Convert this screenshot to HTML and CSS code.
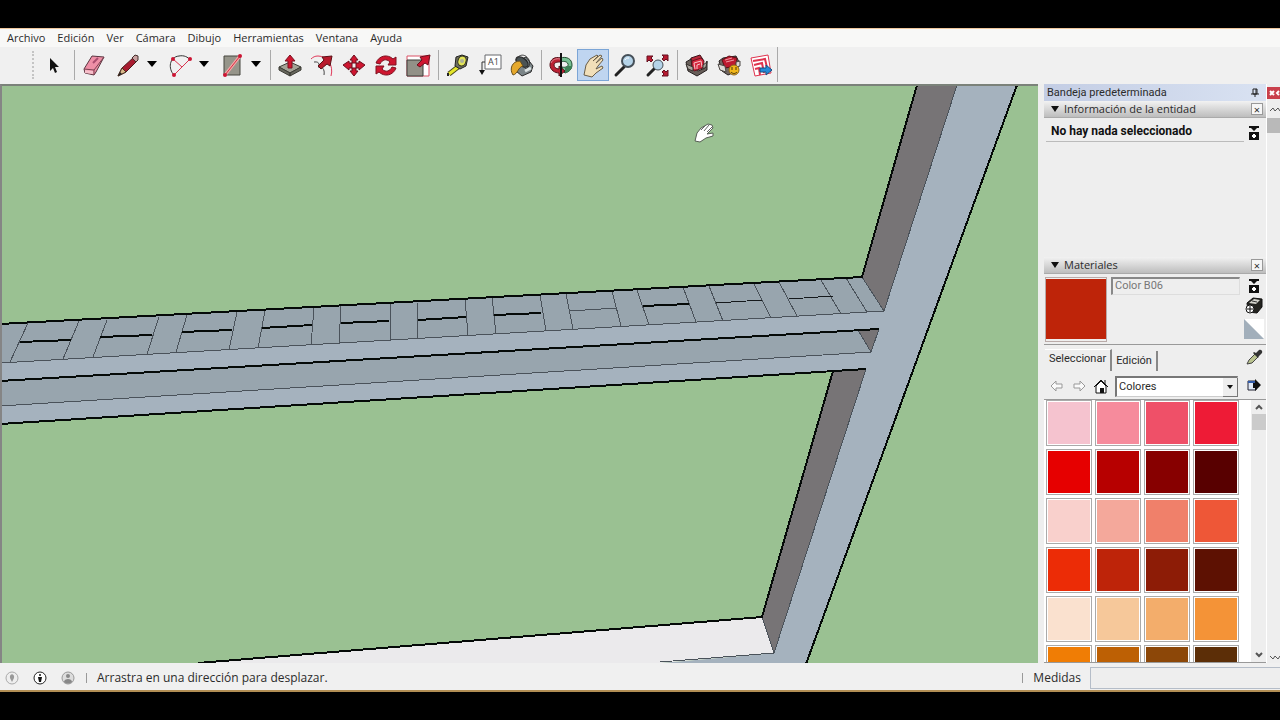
FILE: index.html
```html
<!DOCTYPE html>
<html lang="es">
<head>
<meta charset="utf-8">
<title>Modelador 3D</title>
<link rel="stylesheet" href="styles.css">
</head>
<body>
<div class="app">
  <nav class="menu" aria-label="Menú principal">
    <button>Archivo</button><button>Edición</button><button>Ver</button><button>Cámara</button><button>Dibujo</button><button>Herramientas</button><button>Ventana</button><button>Ayuda</button>
  </nav>

  <div class="toolbar" role="toolbar" aria-label="Herramientas">
    <span class="grip"></span>
    <button class="tool" aria-label="Seleccionar"><svg viewBox="0 0 32 32"><path d="M12 9v13l3-3 2 5 2-1-2-5h4z" fill="#111"/></svg></button>
    <span class="sep"></span>
    <button class="tool" aria-label="Borrador"><svg viewBox="0 0 32 32"><path d="M6 20 14 7l12 1-8 15-2 3-9-2z" fill="#ee8fa6" stroke="#5a3540"/><path d="m6 20 10 1 10-13M16 21v5" fill="none" stroke="#7c4352"/><path d="m7 21 8 1v3l-8-1z" fill="#f7c0cb"/><path d="m15 14 5-5" stroke="#a94d70" stroke-width="2"/></svg></button>
    <span class="split">
      <button class="tool" aria-label="Línea"><svg viewBox="0 0 32 32"><path d="m6 27 4-8L22 8l4 3-12 12z" fill="#a81c30" stroke="#4b1c1c"/><path d="m6 27 4-8 4 4z" fill="#d9b98a" stroke="#4b3020"/><path d="m6 27 2-4 2 2z" fill="#222"/><path d="m20 9 3-3 3 1v4l-2 2z" fill="#c8a0a0" stroke="#44302c"/></svg></button>
      <button class="drop" aria-label="Más líneas"><svg viewBox="0 0 16 16"><path d="M3 4h10l-5 6z"/></svg></button>
    </span>
    <span class="split">
      <button class="tool" aria-label="Arco"><svg viewBox="0 0 32 32"><path d="M10 26C4 20 5 8 15 7c5-1 9 1 11 4" fill="none" stroke="#333"/><path d="m10 26 16-16M9 10l9 8" fill="none" stroke="#d8334e"/><g fill="#cc1533"><circle cx="10" cy="26" r="2"/><circle cx="26" cy="10" r="2"/><circle cx="9" cy="10" r="2"/></g></svg></button>
      <button class="drop" aria-label="Más arcos"><svg viewBox="0 0 16 16"><path d="M3 4h10l-5 6z"/></svg></button>
    </span>
    <span class="split">
      <button class="tool" aria-label="Rectángulo"><svg viewBox="0 0 32 32"><path d="M8 7h16v19H8z" fill="#96958a" stroke="#47473f"/><path d="M9 26 24 7" stroke="#f6a6a6" stroke-width="3"/><path d="M9 26 24 7" stroke="#d33346"/><circle cx="9" cy="26" r="2" fill="#cc1533"/><circle cx="24" cy="7" r="2" fill="#cc1533"/></svg></button>
      <button class="drop" aria-label="Más formas"><svg viewBox="0 0 16 16"><path d="M3 4h10l-5 6z"/></svg></button>
    </span>
    <span class="sep"></span>
    <button class="tool" aria-label="Empujar/tirar"><svg viewBox="0 0 32 32"><path d="m5 18 11-5 11 5-11 6z" fill="#a3a296" stroke="#3c3c36"/><path d="m5 18 11 6v3L5 21zm22 0-11 6v3l11-6z" fill="#66665c" stroke="#3c3c36"/><path d="M14 19v-7h-3l5-6 5 6h-3v7z" fill="#cf1630" stroke="#7a1020"/></svg></button>
    <button class="tool" aria-label="Equidistancia"><svg viewBox="0 0 32 32"><path d="M8 13c7-1 5 5 4 5m0 0c4-1 7 2 6 8" fill="none" stroke="#444"/><path d="M5 10c2-2 4-3 7-3 9 0 16 9 13 20" fill="none" stroke="#e0395a"/><path d="m12 17 6-6-2-3 10-1-2 10-3-2-6 5z" fill="#b81a2c" stroke="#5a1015"/></svg></button>
    <button class="tool" aria-label="Mover"><svg viewBox="0 0 32 32"><g fill="#cf1630" stroke="#6d0f1d"><path d="m16 6 4 5h-2v3h-4v-3h-2z"/><path d="m16 27 4-5h-2v-3h-4v3h-2z"/><path d="m5 16 6-4v2h3v5h-3v2z"/><path d="m27 16-6-4v2h-3v5h3v2z"/></g></svg></button>
    <button class="tool" aria-label="Rotar"><svg viewBox="0 0 32 32"><g fill="#cf1630" stroke="#7d1220"><path d="M6 14C9 6 18 5 23 10l3-2v8h-8l2-3c-4-4-8-2-10 2z"/><path d="M26 19c-3 8-12 9-17 4l-3 2v-8h8l-2 3c4 4 8 2 10-2z"/></g></svg></button>
    <button class="tool" aria-label="Escala"><svg viewBox="0 0 32 32"><path d="M5 7h22v20H5z" fill="#fff" stroke="#db5266"/><path d="M5 11h16v16H5z" fill="#929187" stroke="#3d3d38"/><path d="m15 16 5-5-2-3 10-2-2 10-3-2-5 4z" fill="#cf1630" stroke="#6d0f1d"/></svg></button>
    <span class="sep"></span>
    <button class="tool" aria-label="Medir"><svg viewBox="0 0 32 32"><path d="m7 25 9-7" stroke="#4a4a1c" stroke-width="5"/><path d="m7 25 9-7" stroke="#e5e62b" stroke-width="3"/><path d="M13 17 14 8l6-2 6 2-2 9-6 3z" fill="#6d6e60" stroke="#222"/><ellipse cx="20" cy="12" rx="4" ry="5" fill="#e4e559" stroke="#32321c" transform="rotate(20 20 12)"/><circle cx="20" cy="12" r="2" fill="#aeb29b"/><path d="M6 24v3" stroke="#222" stroke-width="2"/></svg></button>
    <button class="tool" aria-label="Texto"><svg viewBox="0 0 32 32"><path d="M11 6h16v14H11z" fill="#fff" stroke="#66686c"/><text x="14" y="16" class="glyph">A1</text><path d="M11 13H8v9" fill="none" stroke="#333"/><path d="M5 21h6l-3 5z" fill="#111"/></svg></button>
    <button class="tool" aria-label="Pintar"><svg viewBox="0 0 32 32"><path d="m11 12 9-4 7 9-2 6-9 4-6-5z" fill="#7b8588" stroke="#2b2b2b"/><ellipse cx="16" cy="13" rx="7" ry="4" fill="#4a5354" stroke="#222" transform="rotate(35 16 13)"/><path d="M14 12C6 12 3 20 7 26c5-1 5-8 10-9z" fill="#e6a92c" stroke="#69501e"/><path d="M10 12c1-6 9-9 13-1 2 5-1 8-4 9" fill="none" stroke="#333"/><path d="m19 22 6-3" stroke="#dce2e2" stroke-width="3"/></svg></button>
    <span class="sep tight"></span>
    <button class="tool" aria-label="Orbitar"><svg viewBox="0 0 32 32"><path d="M15 9c7-2 12 1 12 7 0 4-3 7-7 8l-3-3v-3c4 1 7-1 6-3-1-3-5-3-8-2z" fill="#77c193" stroke="#234d31"/><path d="M22 17h5c0 4-4 6-7 7v-5z" fill="#3d8356"/><path d="M16 9C9 7 5 11 5 16c0 5 5 8 9 8v3l6-5-6-5v3c-3 0-5-2-5-4 0-3 4-3 7-3z" fill="#bb2134" stroke="#551019"/><path d="M6 14c1-3 5-5 9-4" fill="none" stroke="#df8b94"/><path d="M16 4v24" stroke="#111" stroke-width="2"/></svg></button>
    <button class="tool active" aria-label="Desplazar" aria-pressed="true"><svg viewBox="0 0 32 32"><path d="m7 26 2-10 4-6 7-4 1 1-5 5 7-6 2 1-6 7 6-5 1 2-5 6-2 3 6-3 1 2-7 5-4 4z" fill="#f1dfb9" stroke="#695d48"/></svg></button>
    <button class="tool" aria-label="Zoom"><svg viewBox="0 0 32 32"><path d="m7 26 8-8" stroke="#222" stroke-width="3" stroke-linecap="round"/><circle cx="19" cy="12" r="6" fill="#b5d3e8" stroke="#454f58" stroke-width="2"/><path d="M16 11c1-2 2-2 4-2" stroke="#fff" fill="none"/></svg></button>
    <button class="tool" aria-label="Ver modelo centrado"><svg viewBox="0 0 32 32"><path d="m7 26 7-7" stroke="#222" stroke-width="3" stroke-linecap="round"/><circle cx="17" cy="16" r="5" fill="#b5d3e8" stroke="#454f58"/><g fill="#b71a30" stroke="#641020"><path d="M6 7h6l-2 2 2 2-2 2-2-2-2 2z"/><path d="M27 6v6l-2-2-2 2-2-2 2-2-2-2z"/><path d="M27 27h-6l2-2-2-2 2-2 2 2 2-2z"/></g></svg></button>
    <span class="sep"></span>
    <button class="tool" aria-label="3D Warehouse"><svg viewBox="0 0 32 32"><path d="m10 9 9-3 4 6-5 5-9-1z" fill="#b8273a" stroke="#3c1218"/><path d="m5 13 5-3 1 8 6 4 7-3 2-7v9l-10 6-9-5z" fill="#675e59" stroke="#262020"/><path d="m11 12 9-3 3 3-1 7-9 3-2-3z" fill="#d5273e" stroke="#6c1420"/><path d="m14 20-1-6 7-2 1 6m-5 2v-4l3-1" fill="none" stroke="#f8c3c8"/><path d="m5 15 7 3v4l-5-2zm17 1 4-3-1 5-3 2z" fill="#aba59f" stroke="#37322e"/></svg></button>
    <button class="tool" aria-label="Compartir modelo"><svg viewBox="0 0 32 32"><path d="m6 12 4-3 13-2 3 6-2 9-9 4-6-4z" fill="#716763" stroke="#262020"/><path d="m9 11 7-4 8 2-1 8-11 2z" fill="#bd1a2f" stroke="#5c1018"/><path d="m12 11 7-2m-6 4 8-2" stroke="#f29ca6"/><path d="m5 15 7 2 1 6-6-2zm18-2 4-1v5l-4 1z" fill="#ddd9d5" stroke="#4b4642"/><circle cx="21" cy="21" r="5" fill="#f1b719" stroke="#8d661c"/><path d="M19 18v3m4-3v3m-5 2c2 2 4 2 6 0" fill="none" stroke="#47320f"/></svg></button>
    <button class="tool" aria-label="Enviar a LayOut"><svg viewBox="0 0 32 32"><path d="m6 9 17-3 3 18-16 3z" fill="#fff" stroke="#df334e"/><path d="m8 12 12-2 3 13M9 16l8-2 2 10M10 20l4-1 1 7" fill="none" stroke="#df334e" stroke-width="2"/><path d="M15 19h6v-3l6 5-6 5v-3h-6z" fill="#2589d8" stroke="#164e80"/></svg></button>
    <span class="sep edge"></span>
  </div>

  <div class="main">
    <main class="view">
      <svg class="scene" viewBox="2 86 1036 577" preserveAspectRatio="xMinYMin slice" role="img" aria-label="Modelo 3D">
        <path class="light" d="M0 363 884 311 956 85h61L806 664H650l124-11 92-284L0 424z"/>
        <path class="deck" d="m0 324 862-47 22 34L0 363z"/>
        <path class="deck" d="m0 381 879-52-8 23L0 406z"/>
        <path class="dark" d="M917 85 862 277l22 34 73-226z"/>
        <path class="dark" d="m833 371-71 246 12 36 92-284z"/>
        <path class="dark" d="m858 330 21-1-8 23z"/>
        <path class="pale" d="m186 664 576-47 12 36-124 11z"/>
        <g class="thin">
          <path d="m0 363 884-52 73-226M0 406l871-54 8-23M858 330l13 22M862 277l22 34M866 369l-92 284-12-36M774 653l-114 9"/>
          <path d="M28 323 10 362M79 321 63 359M107 320 93 357M159 317l-12 37M187 315l-11 37M237 312l-8 38M265 311l-7 37M314 308l-3 37M341 306l-2 37M390 303v37M417 302l1 36M465 299l3 36M492 297l4 37M540 295l6 36M566 294l7 35M612 291l9 35M637 290l12 35M683 287l13 35M709 286l14 35M754 284l17 34M779 282l18 34M821 280l20 34M846 278l21 34"/>
          <path d="m569 311 48-3"/>
        </g>
        <path class="mid" d="M716 303l46-3M789 299l44-3"/>
        <g class="thick">
          <path d="m0 324 862-47 55-192M0 381l879-52M0 424l866-55M833 371l-71 246-564 46M1017 85 806 664"/>
          <path d="m20 342 51-2M100 337l52-2M182 332l50-2M262 328l50-3M341 323l48-2M418 320l48-3M494 315l47-2M643 306l46-2"/>
        </g>
        <path d="m695 141 2-8 4-5 7-4 4 1 1 3-6 6 6-1v3l-7 2-6 4z" fill="#fff" stroke="#575f55"/>
        <path d="m701 130 4-4m-1 5 5-6m-2 7 5-5" stroke="#666" fill="none"/>
      </svg>
    </main>

    <aside class="tray">
      <div class="tray-title"><h1>Bandeja predeterminada</h1>
        <button class="pin" aria-label="Fijar"><svg viewBox="0 0 10 10"><path d="M3 1h4v5H3zM1 6h8M5 6v3" fill="none" stroke="#222"/><path d="M6 1v5" stroke="#222"/></svg></button>
      </div>

      <section class="entity">
        <div class="head"><button class="fold"><span class="tri"></span>Información de la entidad</button><button class="close" aria-label="Cerrar información">×</button></div>
        <div class="entity-row">
          <p>No hay nada seleccionado</p>
          <button class="mini" aria-label="Mostrar detalles"><svg viewBox="0 0 12 14"><path d="M1 0h10v2H1zM3 2h6L6 5zM1 6h10v8H1z" fill="#111"/><path d="M6 8v4M4 10h4" stroke="#fff" stroke-width="2"/></svg></button>
        </div>
      </section>

      <section class="materials">
        <div class="head"><button class="fold"><span class="tri"></span>Materiales</button><button class="close" aria-label="Cerrar materiales">×</button></div>
        <div class="current">
          <div class="preview"></div>
          <input type="text" value="Color B06" aria-label="Nombre del material" disabled>
          <div class="side">
            <button class="mini" aria-label="Panel secundario"><svg viewBox="0 0 12 14"><path d="M1 0h10v2H1zM3 2h6L6 5zM1 6h10v8H1z" fill="#111"/><path d="M6 8v4M4 10h4" stroke="#fff" stroke-width="2"/></svg></button>
            <button class="create" aria-label="Crear material"><svg viewBox="0 0 20 20"><path d="m3 7 6-5 9 1v8l-5 6-9-1z" fill="#242420" stroke="#111"/><path d="m5 7 5-4 6 1-4 4z" fill="#d4d4cd"/><path d="m8 5 5 1" stroke="#333"/><circle cx="6" cy="13" r="4" fill="#fff" stroke="#111"/><path d="M6 10v6M3 13h6" stroke="#111"/></svg></button>
            <button class="create" aria-label="Material predeterminado"><svg viewBox="0 0 20 20"><path d="M0 0h20v20z" fill="#fff"/><path d="m0 0 20 20H0z" fill="#a2afbb"/></svg></button>
          </div>
        </div>
        <div class="tabs" role="tablist">
          <button role="tab" class="tab on" aria-selected="true">Seleccionar</button><button role="tab" class="tab" aria-selected="false">Edición</button>
          <button class="dropper" aria-label="Muestra de pintura"><svg viewBox="0 0 18 18"><path d="m2 16 2-4 6-6 3 3-6 6z" fill="#bac38f" stroke="#444"/><path d="m8 5 5 5 1-2 3-3c1-2-1-4-3-3l-3 3-2-1z" fill="#333"/></svg></button>
        </div>
        <div class="nav">
          <button aria-label="Atrás"><svg viewBox="0 0 16 16"><path d="m2 7 5-5v3h6v4H7v3z" fill="#fafafa" stroke="#999"/></svg></button>
          <button aria-label="Adelante"><svg viewBox="0 0 16 16"><path d="M14 7 9 2v3H3v4h6v3z" fill="#fafafa" stroke="#999"/></svg></button>
          <button aria-label="En el modelo"><svg viewBox="0 0 16 16"><path d="M3 7v7h10V7L8 2z" fill="#fff" stroke="#111"/><path d="m1 8 7-7 7 7M12 1v4" fill="none" stroke="#111"/><path d="M7 9h4v5H7z" fill="#111"/></svg></button>
          <span class="picker"><select aria-label="Biblioteca"><option>Colores</option></select><span class="picker-btn"></span></span>
          <button class="detail" aria-label="Detalles"><svg viewBox="0 0 16 16"><path d="M2 2h8v9H2z" fill="#dfe8f6" stroke="#223"/><path d="M2 2h8v2H2z" fill="#335caa"/><path d="m9 0 6 6-6 6V9H7V4h2z" fill="#111"/></svg></button>
        </div>
        <div class="library">
          <div class="swatches">
            <button class="a1" aria-label="Color A01"></button><button class="a2" aria-label="Color A02"></button><button class="a3" aria-label="Color A03"></button><button class="a4" aria-label="Color A04"></button>
            <button class="a5" aria-label="Color A05"></button><button class="a6" aria-label="Color A06"></button><button class="a7" aria-label="Color A07"></button><button class="a8" aria-label="Color A08"></button>
            <button class="b1" aria-label="Color B01"></button><button class="b2" aria-label="Color B02"></button><button class="b3" aria-label="Color B03"></button><button class="b4" aria-label="Color B04"></button>
            <button class="b5" aria-label="Color B05"></button><button class="b6" aria-label="Color B06"></button><button class="b7" aria-label="Color B07"></button><button class="b8" aria-label="Color B08"></button>
            <button class="c1" aria-label="Color C01"></button><button class="c2" aria-label="Color C02"></button><button class="c3" aria-label="Color C03"></button><button class="c4" aria-label="Color C04"></button>
            <button class="c5" aria-label="Color C05"></button><button class="c6" aria-label="Color C06"></button><button class="c7" aria-label="Color C07"></button><button class="c8" aria-label="Color C08"></button>
          </div>
          <div class="scroll">
            <button aria-label="Subir"><svg viewBox="0 0 14 14"><path d="m4 9 3-3 3 3" fill="none" stroke="#555" stroke-width="2"/></svg></button>
            <span class="thumb"></span>
            <button aria-label="Bajar"><svg viewBox="0 0 14 14"><path d="m4 5 3 3 3-3" fill="none" stroke="#555" stroke-width="2"/></svg></button>
          </div>
        </div>
      </section>
    </aside>

    <div class="outer">
      <button class="shut" aria-label="Cerrar bandeja"><svg viewBox="0 0 13 12"><path d="m3 4 4 4m0-4L3 8m9-4-2 2 2 2" fill="none" stroke="#fff" stroke-width="2"/></svg></button>
      <button class="step" aria-label="Desplazar arriba"><svg viewBox="0 0 13 14"><path d="m3 9 3-3 2 3 3-3 2 3" fill="none" stroke="#555"/></svg></button>
      <span class="thumb"></span>
      <button class="step last" aria-label="Desplazar abajo"><svg viewBox="0 0 13 14"><path d="m3 5 3 3 2-3 3 3 2-3" fill="none" stroke="#555"/></svg></button>
    </div>
  </div>

  <footer class="status">
    <button aria-label="Geolocalización"><svg viewBox="0 0 14 14"><circle cx="7" cy="7" r="6" fill="#eee" stroke="#aaa"/><path d="M7 11 5 7c-1-5 5-5 4 0z" fill="#999"/></svg></button>
    <button aria-label="Créditos"><svg viewBox="0 0 14 14"><circle cx="7" cy="7" r="6" fill="#fff" stroke="#222"/><circle cx="7" cy="4" r="1" fill="#111"/><path d="M5 6h4L8 11H6z" fill="#111"/></svg></button>
    <button class="user" aria-label="Iniciar sesión"><svg viewBox="0 0 14 14"><circle cx="7" cy="7" r="6" fill="#ddd" stroke="#999"/><circle cx="7" cy="5" r="2" fill="#888"/><path d="M3 11c0-4 8-4 8 0-3 2-5 2-8 0z" fill="#888"/></svg></button>
    <span class="bar"></span>
    <p>Arrastra en una dirección para desplazar.</p>
    <span class="bar"></span>
    <label for="measure">Medidas</label>
    <input id="measure" type="text">
  </footer>
</div>
</body>
</html>
```
FILE: styles.css
```css
* { box-sizing: border-box; }
body {
  margin: 0;
  padding: 28px 0;
  height: 100vh;
  background: #000;
  display: flex;
  font: 11px/16px "Open Sans", "Noto Sans", sans-serif;
  color: #2b2b2b;
}
button { margin: 0; padding: 0; border: 0; background: none; font: inherit; color: inherit; }
p, h1 { margin: 0; font: inherit; }
svg { display: block; }

.app {
  flex: 1;
  min-width: 0;
  display: flex;
  flex-direction: column;
  background: #f0f0f0;
  border-top: 1px solid #efc79d;
  border-bottom: 2px solid #b28e54;
}

.menu {
  display: flex;
  gap: 12px;
  height: 18px;
  padding-left: 7px;
  background: #f8f8f7;
}

.toolbar { display: flex; align-items: center; height: 37px; padding-left: 32px; padding-bottom: 2px; }
.grip { width: 3px; height: 28px; margin-right: 3px; border-left: 2px dotted #c4c4c4; }
.tool { width: 32px; height: 32px; }
.tool svg { width: 32px; height: 32px; }
.tool.active { background: #bfd5f0; outline: 1px solid #7ba5d6; outline-offset: -1px; }
.split { display: flex; align-items: center; padding: 0 2px; }
.drop svg { width: 16px; height: 16px; }
.sep { width: 8px; height: 30px; background: linear-gradient(#aaa, #aaa) center / 1px 100% no-repeat; }
.sep.tight { width: 7px; }
.sep.edge { width: 1px; height: 35px; }
.glyph { font: 9px "Open Sans", sans-serif; fill: #444; }

.main { flex: 1; min-height: 0; display: flex; }
.view {
  flex: 1;
  min-width: 0;
  overflow: hidden;
  background: #9ac192;
  border-top: 2px solid #7b827a;
  border-left: 2px solid #858585;
}
.scene { width: 100%; height: 100%; }
.light { fill: #a5b2be; }
.deck { fill: #98a5ae; }
.dark { fill: #777476; }
.pale { fill: #ebeaec; }
.thin, .mid, .thick { fill: none; shape-rendering: crispEdges; }
.thin { stroke: #4a525a; }
.mid { stroke: #15191c; }
.thick { stroke: #050a08; stroke-width: 2; stroke-linejoin: round; }

.tray { width: 228px; padding-left: 6px; display: flex; flex-direction: column; background: #eee; }
.tray-title {
  display: flex;
  align-items: center;
  height: 17px;
  padding: 0 6px 0 3px;
  background: linear-gradient(90deg, #c3cde4, #d9e2f2);
}
.tray-title h1 { flex: 1; font-family: Roboto, sans-serif; }
.pin svg { width: 10px; height: 10px; }
.head {
  display: flex;
  align-items: center;
  justify-content: space-between;
  height: 17px;
  padding-right: 3px;
  background: linear-gradient(#f2f2f2, #bdbdbd);
  border-bottom: 1px solid #aaa;
}
.fold { display: flex; align-items: center; gap: 5px; padding-left: 7px; }
.tri { border: 4px solid transparent; border-top: 6px solid #111; border-bottom: 0; }
.close {
  width: 12px;
  height: 12px;
  background: #f6f6f6;
  border: 1px solid #999;
  font-size: 11px;
  line-height: 9px;
}
.entity { min-height: 156px; }
.entity-row {
  display: flex;
  align-items: center;
  justify-content: space-between;
  padding: 5px 6px 0 2px;
}
.entity-row p {
  width: 198px;
  padding: 0 5px 2px;
  border-bottom: 1px solid #bbb;
  font-family: Roboto, sans-serif;
  font-size: 12px;
  font-weight: bold;
  color: #111;
}
.mini svg { width: 12px; height: 14px; }

.materials { flex: 1; min-height: 0; display: flex; flex-direction: column; }
.current { display: flex; height: 71px; padding: 3px 1px 0; border-bottom: 1px solid #999; }
.preview {
  width: 62px;
  height: 65px;
  padding: 1px 0 2px;
  background: #be2409 content-box;
  border: 1px solid #b9aaa8;
}
.current input {
  width: 129px;
  height: 18px;
  margin-left: 4px;
  padding: 0 2px 2px;
  background: #eee;
  border: 1px solid #ddd;
  border-top: 2px solid #888;
  border-left: 2px solid #888;
  font: 11px/16px Roboto, sans-serif;
  color: #777;
}
.side {
  flex: 1;
  display: flex;
  flex-direction: column;
  align-items: center;
  gap: 3px;
  padding: 2px 0 0 2px;
}
.create svg { width: 20px; height: 20px; }

.tabs { display: flex; align-items: flex-end; height: 26px; padding-left: 1px; font-family: Roboto, sans-serif; }
.tab { height: 20px; padding: 0 4px; border-right: 2px solid #888; }
.tab.on { height: 22px; padding-bottom: 4px; border-top: 1px solid #fff; }
.dropper { margin: 0 3px 5px auto; }
.dropper svg { width: 18px; height: 18px; }

.nav { display: flex; align-items: center; gap: 6px; height: 29px; padding: 4px 4px 1px 5px; border-bottom: 1px solid #999; }
.nav svg { width: 16px; height: 16px; }
.picker { flex: 1; display: grid; min-width: 0; }
.picker select {
  grid-area: 1 / 1;
  width: 100%;
  height: 21px;
  appearance: none;
  padding: 0 2px;
  background: #fff;
  border: 1px solid #ccc;
  border-top: 2px solid #777;
  border-left: 2px solid #777;
  border-radius: 0;
  font: 11px/16px Roboto, sans-serif;
  color: inherit;
}
.picker-btn {
  grid-area: 1 / 1;
  place-self: end;
  width: 15px;
  height: 19px;
  border-right: 1px solid #777;
  border-bottom: 1px solid #777;
  background: #eee;
  display: grid;
  place-content: center;
  pointer-events: none;
}
.picker-btn::after { content: ""; border: 3px solid transparent; border-top: 4px solid #111; border-bottom: 0; }
.detail { margin-left: 2px; }

.library {
  flex: 1;
  min-height: 0;
  display: flex;
  justify-content: space-between;
  overflow: hidden;
  background: #fff;
  border-bottom: 1px solid #999;
}
.swatches { display: grid; grid-template-columns: repeat(4, 46px); grid-auto-rows: 46px; gap: 3px; padding: 0 0 0 2px; }
.swatches button { border: 1px solid #aaa; padding: 1px; background-clip: content-box; }
.a1 { background-color: #f5c3cf; } .a2 { background-color: #f68b9c; }
.a3 { background-color: #ef5068; } .a4 { background-color: #ee1b36; }
.a5 { background-color: #e60000; } .a6 { background-color: #b70000; }
.a7 { background-color: #870000; } .a8 { background-color: #580000; }
.b1 { background-color: #f9d0cc; } .b2 { background-color: #f4a89b; }
.b3 { background-color: #f0806a; } .b4 { background-color: #ee5737; }
.b5 { background-color: #ec2c06; } .b6 { background-color: #be2409; }
.b7 { background-color: #8d1c06; } .b8 { background-color: #5d1102; }
.c1 { background-color: #fae1cf; } .c2 { background-color: #f6c89a; }
.c3 { background-color: #f3ad6b; } .c4 { background-color: #f49337; }
.c5 { background-color: #f07d05; } .c6 { background-color: #bd6004; }
.c7 { background-color: #8c4708; } .c8 { background-color: #5c2e07; }

.scroll { width: 15px; display: flex; flex-direction: column; align-items: center; background: #eee; }
.scroll svg { width: 14px; height: 14px; }
.scroll .thumb { width: 14px; height: 16px; background: #cbcbcb; }
.scroll button:last-child { margin-top: auto; }

.outer { width: 14px; display: flex; flex-direction: column; padding-top: 3px; border-left: 1px solid #fff; background: #eee; }
.shut { height: 12px; background: #c9404c; }
.step { height: 15px; padding-top: 3px; }
.shut svg { width: 13px; height: 12px; }
.step svg { width: 13px; height: 14px; }
.outer .thumb { height: 15px; margin-top: 4px; background: #b9b9b9; }
.step.last { margin-top: auto; }

.status { display: flex; align-items: center; height: 27px; padding-left: 5px; padding-top: 3px; font-size: 12px; }
.status svg { width: 14px; height: 14px; margin-right: 14px; }
.status .user svg { margin-right: 9px; }
.status p { flex: 1; }
.bar { width: 1px; height: 10px; margin: 0 10px 0 2px; background: #999; }
.status input { width: 190px; height: 22px; margin-left: 9px; padding: 0 4px; background: #eee; border: 1px solid #b5bdc8; border-right: 0; font: inherit; }
```
